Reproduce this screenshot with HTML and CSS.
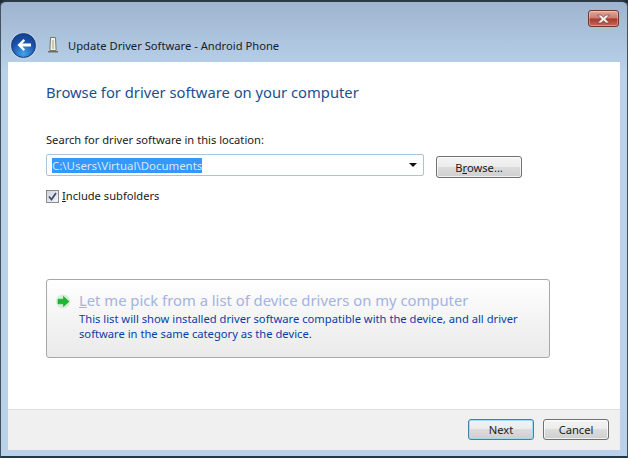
FILE: index.html
```html
<!DOCTYPE html>
<html lang="en">
<head>
    <meta charset="UTF-8">
    <title>Update Driver Software - Android Phone</title>
    <link rel="stylesheet" href="styles.css">
</head>
<body>
    <div class="window">
        <div class="frame-top">
            <div class="close-row">
                <div class="close-btn">
                    <svg width="15" height="10" viewBox="0 0 15 10">
                        <path d="M1.500 1h3.500l2.500 2.200L10 1h3.500L9.600 5l3.900 4H10L7.500 6.800 5 9H1.500l3.900-4z" fill="#f3f0ee" stroke="#6b2a24" stroke-width=".6"/>
                    </svg>
                </div>
            </div>
            <div class="nav-row">
                <div class="back-btn">
                    <svg width="16" height="14" viewBox="0 0 16 14">
                        <path d="M7.500 1 1.500 7l6 6 1.600-1.700-2.700-2.900H15V5.600H6.400l2.700-2.900z" fill="#fff"/>
                    </svg>
                </div>
                <svg class="device-icon" width="12" height="18" viewBox="0 0 12 18">
                    <path d="M3.500 1.500h5l.6 13H2.900z" fill="#f4f2e2" stroke="#77776a"/>
                    <path d="M5 4h2v9H5z" fill="#c9c8b4"/>
                    <path d="M1 15h10v1.500H1z" fill="#6e6e66"/>
                </svg>
                <span class="window-title">Update Driver Software - Android Phone</span>
            </div>
        </div>

        <div class="client">
            <div class="main">
                <h1 class="heading">Browse for driver software on your computer</h1>
                <p class="label">Search for driver software in this location:</p>
                <div class="path-row">
                    <div class="combo">
                        <span class="selected">C:\Users\Virtual\Documents</span>
                        <span class="arrow"></span>
                    </div>
                    <div class="button browse">B<u>r</u>owse...</div>
                </div>
                <div class="check-row">
                    <span class="checkbox">
                        <svg width="9" height="9" viewBox="0 0 9 9">
                            <path d="M1 4.500 3.500 7.500 8 1" fill="none" stroke="#3f4f70" stroke-width="1.800"/>
                        </svg>
                    </span>
                    <span><u>I</u>nclude subfolders</span>
                </div>
                <div class="command-link">
                    <svg class="link-arrow" width="17" height="15" viewBox="0 0 17 15">
                        <circle cx="8" cy="7.500" r="7" fill="#d3f0d6"/>
                        <path d="M8.500 2.500 14 7.500 8.500 12.500V9.800H3V5.200h5.500z" fill="#1cb834" stroke="#0f8f24" stroke-width=".5"/>
                    </svg>
                    <div>
                        <div class="link-title"><u>L</u>et me pick from a list of device drivers on my computer</div>
                        <div class="link-text">This list will show installed driver software compatible with the device, and all driver<br>software in the same category as the device.</div>
                    </div>
                </div>
            </div>
            <div class="footer">
                <div class="button next">Next</div>
                <div class="button">Cancel</div>
            </div>
        </div>
    </div>
</body>
</html>
```

FILE: styles.css
```css
html, body {
    margin: 0;
    padding: 0;
}
body {
    width: 628px;
    height: 458px;
    overflow: hidden;
    background: #1d2a33;
    font-family: "Noto Sans", "Open Sans", sans-serif;
    font-size: 11.150px;
    color: #1a1a1a;
}
.window {
    box-sizing: border-box;
    width: 628px;
    height: 458px;
    padding: 0 7px 6px;
    display: flex;
    flex-direction: column;
    background: linear-gradient(#9fb5cf, #b9d1ea 70px);
    border: 1px solid #42525f;
    border-top: 2px solid #2c3a46;
    border-bottom: 2px solid #1d3a48;
    border-radius: 6px 6px 0 0;
}
.frame-top {
    height: 60px;
    margin: 0 -6px;
    flex: none;
}
.close-row {
    height: 18px;
    padding: 8px 7px 0 0;
    display: flex;
    justify-content: flex-end;
}
.close-btn {
    box-sizing: border-box;
    width: 31px;
    height: 17px;
    display: flex;
    align-items: center;
    justify-content: center;
    border: 1px solid #6e3a34;
    border-radius: 3px;
    background: linear-gradient(#e0a99f, #cb7a6e 48%, #a8382c 52%, #c9675a);
    box-shadow: inset 0 0 0 1px rgba(255, 255, 255, .3);
}
.nav-row {
    height: 34px;
    padding-left: 9px;
    display: flex;
    align-items: center;
}
.back-btn {
    box-sizing: border-box;
    width: 25px;
    height: 25px;
    display: flex;
    align-items: center;
    justify-content: center;
    border-radius: 50%;
    border: 1px solid #1c3c78;
    background: radial-gradient(circle at 50% 85%, #41a5ea, #1a50ab 55%, #123a86);
    box-shadow: 0 0 2px #dfeaf5;
}
.device-icon {
    margin-left: 11px;
}
.window-title {
    margin-left: 9px;
    font-size: 11.200px;
    color: #15202e;
}
.client {
    flex: 1;
    display: flex;
    flex-direction: column;
    background: #fff;
}
.main {
    flex: 1;
    padding: 20px 38px 0;
}
.heading {
    margin: 0;
    font-size: 14.750px;
    line-height: 20px;
    font-weight: normal;
    color: #1c4f8f;
}
.label {
    margin: 30px 0 0;
    line-height: 16px;
}
.path-row {
    margin-top: 6px;
    display: flex;
    align-items: flex-start;
}
.combo {
    box-sizing: border-box;
    width: 378px;
    height: 22px;
    padding: 0 6px 0 5px;
    display: flex;
    align-items: center;
    justify-content: space-between;
    border: 1px solid #a9c5dc;
    border-radius: 2px;
}
.selected {
    background: #3399ff;
    color: #d8e6f5;
    font-size: 11.450px;
    line-height: 15px;
}
.arrow {
    border-top: 4px solid #111;
    border-left: 4px solid transparent;
    border-right: 4px solid transparent;
}
.button {
    box-sizing: border-box;
    width: 66px;
    height: 21px;
    display: flex;
    align-items: center;
    justify-content: center;
    border: 1px solid #707070;
    border-radius: 3px;
    background: linear-gradient(#f4f4f4, #ebebeb 50%, #dcdcdc 50%, #cfcfcf);
    box-shadow: inset 0 0 0 1px rgba(255, 255, 255, .7);
}
.browse {
    width: 86px;
    height: 22px;
    margin: 2px 0 0 12px;
}
.check-row {
    margin-top: 10px;
    display: flex;
    align-items: center;
    gap: 3px;
    line-height: 16px;
}
.checkbox {
    box-sizing: border-box;
    width: 13px;
    height: 13px;
    display: flex;
    align-items: center;
    justify-content: center;
    border: 1px solid #8a8a8a;
    background: linear-gradient(135deg, #cfd3da, #f4f5f7);
}
.command-link {
    box-sizing: border-box;
    width: 504px;
    height: 79px;
    margin-top: 75px;
    padding: 11px 0 0 8px;
    display: flex;
    gap: 7px;
    border: 1px solid #a8a8a8;
    border-radius: 3px;
    background: linear-gradient(#ffffff, #f5f5f5 45%, #eaeaea);
}
.link-arrow {
    margin-top: 3px;
    flex: none;
}
.link-title {
    font-size: 14.800px;
    line-height: 18px;
    color: #a3b3dd;
}
.link-text {
    margin-top: 2px;
    line-height: 15px;
    font-size: 11.200px;
    color: #0a3ca8;
}
.footer {
    box-sizing: border-box;
    height: 41px;
    flex: none;
    padding: 9px 11px 0 0;
    display: flex;
    justify-content: flex-end;
    gap: 9px;
    background: #f0f0f0;
    border-top: 1px solid #dfdfdf;
}
.next {
    border-color: #3c84a8;
    box-shadow: inset 0 0 0 1px #9fdcf2;
}
```
